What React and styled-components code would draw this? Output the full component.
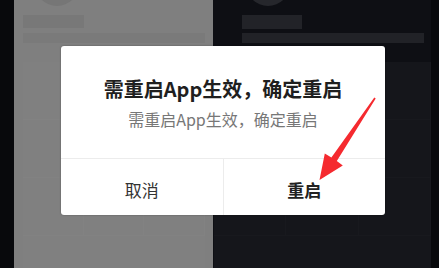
import React from "react";
import styled, { createGlobalStyle } from "styled-components";

const Global = createGlobalStyle`
  html, body { margin: 0; padding: 0; background: #0a0b0e; }
  body { width: 439px; height: 268px; overflow: hidden; font-family: "Noto Sans CJK SC", "Noto Sans", sans-serif; }
  #root { width: 439px; height: 268px; }
`;

const Screen = styled.div`
  position: relative;
  width: 439px;
  height: 268px;
  display: flex;
  background: #0a0b0e;
  overflow: hidden;
`;

const Edge = styled.div`
  width: ${(p) => p.$w}px;
  flex: none;
  background: #08090c;
`;

const Pane = styled.div`
  width: ${(p) => (p.$w ? `${p.$w}px` : "auto")};
  flex: ${(p) => (p.$w ? "none" : "1")};
  background: ${(p) => p.$bg};
  display: flex;
  flex-direction: column;
  padding: 0 ${(p) => p.$pr}px 0 ${(p) => p.$pl}px;
  box-sizing: border-box;
`;

const Avatar = styled.div`
  width: 44px;
  height: 44px;
  border-radius: 50%;
  background: ${(p) => p.$c};
  margin: -38px 0 0 ${(p) => p.$ml}px;
`;

const Bar = styled.div`
  width: ${(p) => p.$w}px;
  height: ${(p) => p.$h}px;
  background: ${(p) => p.$c};
  margin-top: ${(p) => p.$mt}px;
`;

const Grid = styled.div`
  margin: 19px ${(p) => p.$mr}px 0 ${(p) => p.$ml}px;
  flex: 1;
  display: grid;
  grid-template-columns: repeat(3, 1fr);
  grid-auto-rows: 58px;
  background: ${(p) => p.$bg};
`;

const Cell = styled.div`
  border-right: 1px solid ${(p) => p.$line};
  border-bottom: 1px solid ${(p) => p.$line};
`;

const Dialog = styled.div`
  position: absolute;
  left: 61px;
  top: 46px;
  width: 324px;
  height: 169px;
  background: #ffffff;
  border-radius: 3px;
  box-shadow: 0 0 2px rgba(0, 0, 0, 0.35);
  display: flex;
  flex-direction: column;
`;

const Body = styled.div`
  height: 113px;
  display: flex;
  flex-direction: column;
  align-items: center;
  padding-top: 29px;
  box-sizing: border-box;
  border-bottom: 1px solid #ececec;
`;

const Title = styled.div`
  font-size: 20px;
  font-weight: 700;
  color: #1f1f1f;
  line-height: 28px;
`;

const Message = styled.div`
  font-size: 16px;
  color: #777777;
  line-height: 22px;
  margin-top: 5px;
`;

const Actions = styled.div`
  flex: 1;
  display: flex;
`;

const Action = styled.div`
  flex: 1;
  display: flex;
  align-items: center;
  justify-content: center;
  padding-top: 4px;
  font-size: 17px;
  font-weight: ${(p) => (p.$strong ? 700 : 400)};
  color: ${(p) => (p.$strong ? "#222222" : "#333333")};
  & + & {
    border-left: 1px solid #ececec;
  }
`;

const Arrow = styled.svg`
  position: absolute;
  left: 0;
  top: 0;
  width: 439px;
  height: 268px;
  pointer-events: none;
`;

function Cells({ line, count }) {
  return Array.from({ length: count }, (_, i) => <Cell key={i} $line={line} />);
}

export default function App() {
  return (
    <>
      <Global />
      <Screen>
        <Edge $w={14} />
        <Pane $w={199} $bg="#7f7f7f" $pl={9} $pr={8}>
          <Avatar $c="#767676" $ml={12} />
          <Bar $w={61} $h={13} $c="#787878" $mt={9} />
          <Bar $w={182} $h={10} $c="#7a7a7a" $mt={5} />
          <Grid $bg="#808080" $ml={0} $mr={0}>
            <Cells line="#828282" count={9} />
          </Grid>
        </Pane>
        <Pane $bg="#0e0f14" $pl={29} $pr={0}>
          <Avatar $c="#26272c" $ml={4} />
          <Bar $w={60} $h={14} $c="#222328" $mt={9} />
          <Bar $w={182} $h={10} $c="#212227" $mt={4} />
          <Grid $bg="#15161b" $ml={-28} $mr={0}>
            <Cells line="#18191e" count={9} />
          </Grid>
        </Pane>
        <Edge $w={8} />
        <Dialog>
          <Body>
            <Title>需重启App生效，确定重启</Title>
            <Message>需重启App生效，确定重启</Message>
          </Body>
          <Actions>
            <Action>取消</Action>
            <Action $strong>重启</Action>
          </Actions>
        </Dialog>
        <Arrow viewBox="0 0 439 268">
          <polygon
            points="374.3,97.6 375.7,98.4 336.8,161 342.8,165.6 319.5,180 324.8,153.4 331.4,157.4"
            fill="#f52a2f"
          />
        </Arrow>
      </Screen>
    </>
  );
}
